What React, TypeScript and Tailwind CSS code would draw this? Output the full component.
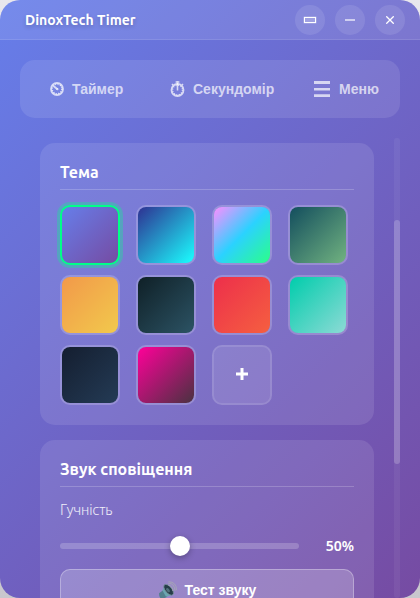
import type { ReactNode } from 'react';

const swatches = [
  'bg-[linear-gradient(135deg,#667eea,#764ba2)]',
  'bg-[linear-gradient(135deg,#2e3192,#1bffff)]',
  'bg-[linear-gradient(135deg,#fc8eff,#2bd2ff_50%,#2bff88)]',
  'bg-[linear-gradient(135deg,#134e5e,#71b280)]',
  'bg-[linear-gradient(135deg,#f2994a,#f2c94c)]',
  'bg-[linear-gradient(135deg,#0f2027,#2c5364)]',
  'bg-[linear-gradient(135deg,#ed2f4b,#f55f40)]',
  'bg-[linear-gradient(135deg,#00cdac,#8ddad5)]',
  'bg-[linear-gradient(135deg,#141e30,#243b55)]',
  'bg-[linear-gradient(135deg,#ff0099,#493240)]',
];

function WindowButton({ children }: { children: ReactNode }) {
  return (
    <button className="flex size-[30px] items-center justify-center rounded-full bg-white/10 text-white">
      {children}
    </button>
  );
}

function ClockIcon() {
  return (
    <svg width="14" height="14" viewBox="0 0 14 14" fill="none" stroke="currentColor">
      <circle cx="7" cy="7" r="6" strokeWidth="1.8" />
      <circle cx="7" cy="7" r="4.8" strokeWidth="1.5" strokeDasharray="1.1 1.41" />
      <path d="M3.6 4 7.4 7.2" strokeWidth="1.9" />
      <circle cx="7.4" cy="7.2" r="1.1" fill="currentColor" stroke="none" />
    </svg>
  );
}

function StopwatchIcon() {
  return (
    <svg width="15" height="16" viewBox="0 0 15 16" fill="none" stroke="currentColor">
      <circle cx="7.5" cy="9" r="6" strokeWidth="1.8" />
      <circle cx="7.5" cy="9" r="4.8" strokeWidth="1.2" strokeDasharray="1 1.51" />
      <path d="M7.5 0v9.5M5.6 1h3.8M12 4l1-1M3 4l-1-1" strokeWidth="1.6" />
    </svg>
  );
}

function MenuIcon() {
  return (
    <svg width="16" height="16" viewBox="0 0 16 16" fill="currentColor">
      <path d="M0 0h16v3H0zM0 7h16v2.5H0zM0 13.2h16V16H0z" />
    </svg>
  );
}

function SpeakerIcon() {
  return (
    <svg width="19" height="19" viewBox="0 0 19 19" fill="none">
      <path d="M1 12.3 5.5 9 9.3 15.7 4.2 18.2Q1 17.3 1 12.3Z" fill="#527f8d" />
      <path d="M4.5 9.6 7.2 3.2 14.2 14.1 8 15.8Z" fill="#6aa6b0" />
      <ellipse cx="10.6" cy="8.8" rx="3.2" ry="6.5" transform="rotate(-40 10.6 8.8)" fill="#263d48" stroke="#78909c" strokeWidth=".8" />
      <ellipse cx="10" cy="9.2" rx="1.4" ry="2.5" transform="rotate(-40 10 9.2)" fill="#52717b" />
      <path d="M10.5 4.2q4.2.8 4.5 5.8M10.2 2.2q6.3 0 6.8 7.5M10.5.7q8 .2 8 8.5" stroke="#a4a6b5" strokeWidth="1" />
    </svg>
  );
}

function CardTitle({ children }: { children: ReactNode }) {
  return (
    <h2 className="h-[31px] border-b border-white/20 pt-0.5 font-['Ubuntu','Noto_Sans',sans-serif] text-[16px] leading-[22px] font-semibold text-white">
      {children}
    </h2>
  );
}

export default function App() {
  return (
    <div className="h-[598px] w-[420px] overflow-hidden bg-[linear-gradient(180deg,#e9e7ed,#c9c7cd)] font-['Liberation_Sans',sans-serif]">
      <div className="flex h-full flex-col overflow-hidden rounded-[20px] bg-[linear-gradient(135deg,#667eea_0%,#764ba2_100%)]">
        <header className="flex h-10 shrink-0 items-center justify-between border-b border-white/10 bg-white/10 pr-[15px] pl-[25px]">
          <h1 className="font-['Ubuntu','Noto_Sans',sans-serif] text-[14px] leading-5 font-semibold text-white [text-shadow:0_2px_4px_rgba(0,0,0,0.2)]">
            DinoxTech Timer
          </h1>
          <div className="flex gap-2.5">
            <WindowButton><span className="h-1.5 w-3 border-[1.3px] border-white ring-[0.3px] ring-white/60 bg-white/20" /></WindowButton>
            <WindowButton><span className="h-0.5 w-2.5 bg-white/60" /></WindowButton>
            <WindowButton>
              <svg width="8" height="8" viewBox="0 0 8 8" stroke="currentColor" strokeWidth="1.3">
                <path d="m.3.3 7.4 7.4M7.7.3.3 7.7" />
              </svg>
            </WindowButton>
          </div>
        </header>

        <nav className="mx-5 mt-5 flex h-[58px] shrink-0 items-center rounded-[15px] bg-white/10 pl-[30px] text-[14px] leading-5 font-bold text-white/70">
          <div className="flex w-[120px] items-center gap-2"><ClockIcon /><span>Таймер</span></div>
          <div className="flex w-[144px] items-center gap-2"><StopwatchIcon /><span>Секундомір</span></div>
          <div className="flex items-center gap-[9px]"><MenuIcon /><span>Меню</span></div>
        </nav>

        <main className="mt-5 flex min-h-0 flex-1 justify-between pr-5 pl-10">
          <div className="flex w-[334px] flex-col gap-[15px] pt-[5px]">
            <section className="h-[282px] shrink-0 rounded-[15px] bg-white/10 px-5 pt-4">
              <CardTitle>Тема</CardTitle>
              <div className="mt-[15px] grid grid-cols-[repeat(4,60px)] gap-x-4 gap-y-2.5">
                {swatches.map((gradient, index) => (
                  <button
                    key={gradient}
                    className={`size-[60px] rounded-[10px] border-2 ${gradient} ${
                      index === 0
                        ? 'border-[#00ff88] shadow-[0_0_0_3px_rgba(0,255,136,0.3)]'
                        : 'border-white/20 bg-clip-padding'
                    }`}
                  />
                ))}
                <button className="flex size-[60px] items-center justify-center rounded-[10px] border-2 border-white/20 bg-white/10 bg-clip-padding pb-0.5 text-white">
                  <svg width="12" height="12" viewBox="0 0 12 12" stroke="currentColor" strokeWidth="3">
                    <path d="M0 6h12M6 0v12" />
                  </svg>
                </button>
              </div>
            </section>

            <section className="h-[240px] shrink-0 rounded-[15px] bg-white/10 px-5 pt-4">
              <CardTitle>Звук сповіщення</CardTitle>
              <div className="mt-[13px] font-['Noto_Sans',sans-serif] text-[14px] leading-5 font-light tracking-[-0.12px] text-white/90">Гучність</div>
              <div className="mt-4 flex h-5 items-center justify-between">
                <div className="flex h-1.5 w-[239px] items-center justify-center rounded-[3px] bg-white/20">
                  <span className="size-5 shrink-0 rounded-full bg-white shadow-[0_2px_6px_rgba(0,0,0,0.3)]" />
                </div>
                <span className="font-['Noto_Sans',sans-serif] text-[14px] leading-5 font-semibold text-white">50%</span>
              </div>
              <button className="mt-[13px] flex h-[42px] w-full items-center justify-center gap-2 rounded-[10px] border border-white/30 bg-white/20 text-[14px] leading-5 font-bold text-white">
                <SpeakerIcon /><span>Тест звуку</span>
              </button>
            </section>
          </div>
          <div className="w-1.5 rounded-[3px] bg-white/5 pt-[82px]">
            <div className="h-[244px] rounded-[3px] bg-white/20" />
          </div>
        </main>
      </div>
    </div>
  );
}
